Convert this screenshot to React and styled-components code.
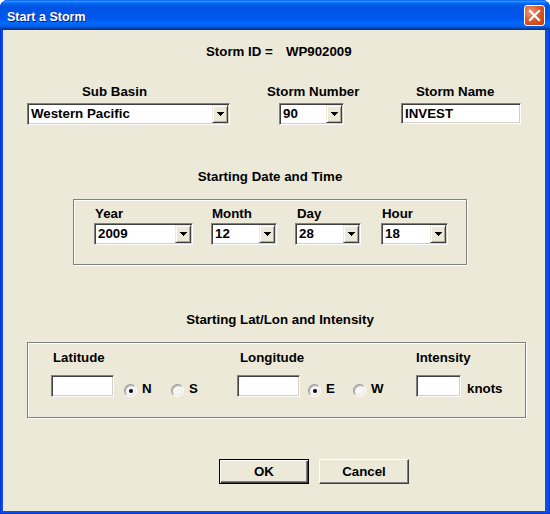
import React from 'react';
import styled, { createGlobalStyle } from 'styled-components';

const GlobalStyle = createGlobalStyle`
  html, body {
    margin: 0;
    padding: 0;
    background: #ffffff;
  }
  body {
    font-family: "Liberation Sans", Arial, sans-serif;
  }
`;

const Window = styled.div`
  width: 550px;
  height: 514px;
  box-sizing: border-box;
  display: flex;
  flex-direction: column;
  background: #0a4fe4;
  border-radius: 8px 8px 0 0;
  overflow: hidden;
  box-shadow: inset 1px 0 #0831d9, inset -1px 0 #0831d9, inset 0 -1px #0831d9;
`;

const TitleBar = styled.div`
  flex: none;
  height: 30px;
  box-sizing: border-box;
  padding: 5px 5px 0 7px;
  display: flex;
  align-items: flex-start;
  justify-content: space-between;
  background: linear-gradient(to bottom, #0058ee 0%, #3593ff 4%, #288eff 6%, #127dff 8%, #036ffc 10%, #0262ee 14%, #0057e5 20%, #0054e3 24%, #0055eb 56%, #005bf5 66%, #026afe 76%, #0062ef 86%, #0052d6 92%, #0040ab 94%, #003092 100%);
`;

const Title = styled.span`
  margin-top: 4px;
  color: #ffffff;
  font-size: 12.5px;
  font-weight: bold;
  line-height: 16px;
  text-shadow: 1px 1px #0a1883;
`;

const CloseButton = styled.div`
  width: 21px;
  height: 21px;
  box-sizing: border-box;
  border: 1px solid #ffffff;
  border-radius: 3px;
  background: radial-gradient(circle at 30% 30%, #ee9a78 0%, #dc5a2c 45%, #c23c0c 100%);
  display: flex;
  align-items: center;
  justify-content: center;
`;

const Client = styled.div`
  flex: 1;
  margin: 0 5px 3px 3px;
  background: #ece9d8;
  display: flex;
  flex-direction: column;
  color: #000000;
  font-size: 13.3px;
  font-weight: bold;
  line-height: 16px;
`;

const StormIdRow = styled.div`
  margin-top: 14px;
  padding-left: 203px;
  display: flex;
  gap: 13px;
  white-space: nowrap;
`;

const TopRow = styled.div`
  margin-top: 24px;
  padding-left: 24px;
  display: flex;
`;

const Column = styled.div`
  display: flex;
  flex-direction: column;
  flex: none;
  width: ${p => (p.$w ? `${p.$w}px` : 'auto')};
  margin-left: ${p => p.$ml || 0}px;
`;

const Label = styled.div`
  height: 16px;
  padding-left: ${p => p.$indent || 0}px;
  margin-bottom: ${p => (p.$gap === undefined ? 3 : p.$gap)}px;
  white-space: nowrap;
`;

const sunken = `
  box-sizing: border-box;
  background: #ffffff;
  border-style: solid;
  border-width: 1px;
  border-color: #808080 #ffffff #ffffff #808080;
  box-shadow: inset 1px 1px 0 #404040, inset -1px -1px 0 #d4d0c8;
`;

const ComboBox = styled.div`
  ${sunken}
  width: ${p => p.$w}px;
  height: 22px;
  margin-left: ${p => p.$ml || 0}px;
  padding: 1px;
  display: flex;
`;

const ComboValue = styled.div`
  flex: 1;
  padding-left: 2px;
  line-height: 18px;
  white-space: nowrap;
  overflow: hidden;
`;

const DropButton = styled.div`
  flex: none;
  width: 16px;
  box-sizing: border-box;
  background: #ece9d8;
  border: 1px solid;
  border-color: #ece9d8 #404040 #404040 #ece9d8;
  box-shadow: inset 1px 1px 0 #ffffff, inset -1px -1px 0 #aca899;
  display: flex;
  align-items: center;
  justify-content: center;
`;

const TextBox = styled.div`
  ${sunken}
  width: ${p => p.$w}px;
  height: ${p => p.$h || 22}px;
  padding: 1px 3px;
  line-height: 18px;
  flex: none;
`;

const Section = styled.div`
  margin-top: ${p => p.$mt}px;
  margin-left: ${p => p.$ml}px;
  width: ${p => p.$w}px;
  display: flex;
  flex-direction: column;
`;

const Heading = styled.div`
  height: 16px;
  text-align: center;
  padding-left: ${p => p.$shift || 0}px;
  margin-bottom: 14px;
  white-space: nowrap;
`;

const GroupBox = styled.div`
  box-sizing: border-box;
  height: ${p => p.$h}px;
  padding: ${p => p.$pt}px 0 0 ${p => p.$pl}px;
  border: 1px solid #808080;
  box-shadow: inset 1px 1px 0 #ffffff, 1px 1px 0 #ffffff;
  display: flex;
  gap: ${p => p.$gap || 0}px;
`;

const InputRow = styled.div`
  display: flex;
  align-items: flex-start;
`;

const Radios = styled.div`
  display: flex;
  margin-left: ${p => p.$ml}px;
  margin-top: 9px;
`;

const RadioOption = styled.div`
  width: ${p => p.$w}px;
  display: flex;
  align-items: flex-start;
  gap: 5px;
`;

const RadioCircle = styled.div`
  width: 13px;
  height: 13px;
  box-sizing: border-box;
  border-radius: 50%;
  border: 1px solid;
  border-color: #9a9a9a #ffffff #ffffff #9a9a9a;
  box-shadow: inset 1px 1px 0 #b0b0b0, inset -1px -1px 0 #e6e4dc;
  background: #f6f6f4;
  display: flex;
  align-items: center;
  justify-content: center;

  &::after {
    content: '';
    width: 4px;
    height: 4px;
    border-radius: 50%;
    background: ${p => (p.$checked ? '#000000' : 'transparent')};
  }
`;

const RadioText = styled.span`
  margin-top: -3px;
`;

const Units = styled.span`
  margin-left: 6px;
  margin-top: 6px;
`;

const ButtonRow = styled.div`
  margin-top: 41px;
  padding-left: 216px;
  display: flex;
  gap: 10px;
`;

const Button = styled.button`
  width: 90px;
  height: 25px;
  box-sizing: border-box;
  padding: 0;
  background: #ece9d8;
  color: #000000;
  font-family: "Liberation Sans", Arial, sans-serif;
  font-size: 13.3px;
  font-weight: bold;
  border: 1px solid;
  border-color: ${p => (p.$default ? '#000000' : '#ffffff #404040 #404040 #ffffff')};
  box-shadow: ${p =>
    p.$default
      ? 'inset 1px 1px 0 #ffffff, inset -1px -1px 0 #404040, inset -2px -2px 0 #808080'
      : 'inset -1px -1px 0 #808080'};
`;

const Arrow = () => (
  <svg width="7" height="4" viewBox="0 0 7 4" shapeRendering="crispEdges">
    <path d="M0 0h7v1H0z M1 1h5v1H1z M2 2h3v1H2z M3 3h1v1H3z" fill="#000" />
  </svg>
);

const Combo = ({ w, ml, value }) => (
  <ComboBox $w={w} $ml={ml}>
    <ComboValue>{value}</ComboValue>
    <DropButton>
      <Arrow />
    </DropButton>
  </ComboBox>
);

const Radio = ({ w, checked, label }) => (
  <RadioOption $w={w}>
    <RadioCircle $checked={checked} />
    <RadioText>{label}</RadioText>
  </RadioOption>
);

const dateFields = [
  { label: 'Year', value: '2009', w: 99 },
  { label: 'Month', value: '12', w: 66 },
  { label: 'Day', value: '28', w: 66, indent: 2 },
  { label: 'Hour', value: '18', w: 67, ml: 2 },
];

export default function App() {
  return (
    <>
      <GlobalStyle />
      <Window>
        <TitleBar>
          <Title>Start a Storm</Title>
          <CloseButton>
            <svg width="13" height="13" viewBox="0 0 13 13">
              <path d="M2 2L11 11M11 2L2 11" stroke="#fff" strokeWidth="2.2" strokeLinecap="square" />
            </svg>
          </CloseButton>
        </TitleBar>
        <Client>
          <StormIdRow>
            <span>Storm ID =</span>
            <span>WP902009</span>
          </StormIdRow>

          <TopRow>
            <Column $w={203}>
              <Label $indent={55}>Sub Basin</Label>
              <Combo w={203} value="Western Pacific" />
            </Column>
            <Column $w={134} $ml={37}>
              <Label>Storm Number</Label>
              <Combo w={65} ml={12} value="90" />
            </Column>
            <Column $w={120}>
              <Label $indent={15}>Storm Name</Label>
              <TextBox $w={120} $h={21}>INVEST</TextBox>
            </Column>
          </TopRow>

          <Section $mt={44} $ml={70} $w={394}>
            <Heading>Starting Date and Time</Heading>
            <GroupBox $h={66} $pt={6} $pl={20} $gap={18}>
              {dateFields.map(f => (
                <Column key={f.label} $w={f.w} $ml={f.ml}>
                  <Label $indent={f.indent || 1} $gap={1}>{f.label}</Label>
                  <Combo w={f.w} value={f.value} />
                </Column>
              ))}
            </GroupBox>
          </Section>

          <Section $mt={47} $ml={24} $w={499}>
            <Heading $shift={7}>Starting Lat/Lon and Intensity</Heading>
            <GroupBox $h={76} $pt={7} $pl={23}>
              <Column $w={186}>
                <Label $indent={2} $gap={9}>Latitude</Label>
                <InputRow>
                  <TextBox $w={63} />
                  <Radios $ml={10}>
                    <Radio w={47} checked label="N" />
                    <Radio w={40} label="S" />
                  </Radios>
                </InputRow>
              </Column>
              <Column $w={179}>
                <Label $indent={3} $gap={9}>Longitude</Label>
                <InputRow>
                  <TextBox $w={63} />
                  <Radios $ml={8}>
                    <Radio w={45} checked label="E" />
                    <Radio w={40} label="W" />
                  </Radios>
                </InputRow>
              </Column>
              <Column>
                <Label $gap={9}>Intensity</Label>
                <InputRow>
                  <TextBox $w={45} />
                  <Units>knots</Units>
                </InputRow>
              </Column>
            </GroupBox>
          </Section>

          <ButtonRow>
            <Button $default>OK</Button>
            <Button>Cancel</Button>
          </ButtonRow>
        </Client>
      </Window>
    </>
  );
}
